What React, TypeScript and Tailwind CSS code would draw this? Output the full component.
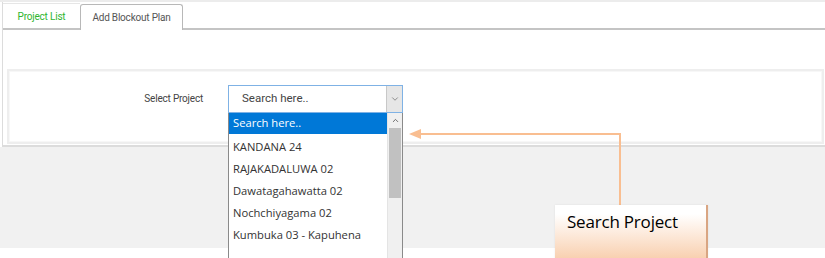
import { ChevronDown, ChevronUp } from "lucide-react";

const projects = [
  "KANDANA 24",
  "RAJAKADALUWA 02",
  "Dawatagahawatta 02",
  "Nochchiyagama 02",
  "Kumbuka 03 - Kapuhena",
];

const App = () => {
  return (
    <div className="relative w-[825px] h-[258px] overflow-hidden bg-white font-['Roboto',sans-serif]">
      {/* Main page area */}
      <div className="border-t-2 border-[#ececec]">
        <div className="ml-[2px] h-[145px] border-l border-b-2 border-[#dcdcdc] flex flex-col">
          {/* Tabs */}
          <div className="flex items-end h-[27px] mt-[1px] border-b-2 border-[#c4c4c4]">
            <div className="w-[77px] h-[25px] flex items-center justify-center text-[10px] tracking-[-0.2px] text-[#2fb52f] border-t border-[#e6e6e6]">
              Project List
            </div>
            <div className="w-[103px] h-[26px] -mb-[2px] flex items-center justify-center text-[10px] tracking-[-0.2px] text-[#555] bg-white border border-b-0 border-[#b8b8b8] rounded-t-[3px]">
              Add Blockout Plan
            </div>
          </div>

          {/* Form panel */}
          <div className="mt-[39px] ml-[4px] mr-[1px] h-[75px] border-2 border-[#eeeeee] shadow-[inset_0_0_0_1px_#f7f7f7] flex items-center">
            <div className="w-[219px] pr-[25px] text-right text-[10px] tracking-[-0.2px] text-[#444] -mt-[16px]">
              Select Project
            </div>
            <div className="-mt-[16px] flex h-[28px] w-[175px] border border-[#7fb2e5] bg-white">
              <div className="flex-1 flex items-center pl-[13px] text-[11.5px] text-[#444]">
                Search here..
              </div>
              <div className="w-[16px] flex items-center justify-center bg-[#e6e6e6] border-l border-[#c8c8c8]">
                <ChevronDown size={10} strokeWidth={1.5} className="text-[#555]" />
              </div>
            </div>
          </div>
        </div>
        <div className="h-[101px] bg-[#f1f1f1]" />
      </div>

      {/* Open dropdown list */}
      <div className="absolute left-[228px] top-[113px] w-[175px] h-[150px] bg-white border-l border-r border-[#8a8a8a] flex font-['Open_Sans',sans-serif]">
        <div className="flex-1 flex flex-col">
          <div className="h-[21px] flex items-center pl-[4px] bg-[#0078d7] text-white text-[11.2px]">
            Search here..
          </div>
          <div className="mt-[2px]">
            {projects.map((p) => (
              <div key={p} className="h-[22px] flex items-center pl-[4px] text-[11.2px] text-[#333]">
                {p}
              </div>
            ))}
          </div>
        </div>
        <div className="w-[15px] flex flex-col bg-[#f0f0f0] border-l border-[#e4e4e4]">
          <div className="h-[15px] flex items-center justify-center">
            <ChevronUp size={9} strokeWidth={2} className="text-[#444]" />
          </div>
          <div className="h-[70px] bg-[#c1c1c1] mx-[1px]" />
        </div>
      </div>

      {/* Annotation arrow */}
      <svg className="absolute left-[405px] top-[126px]" width="220" height="82" viewBox="0 0 220 82">
        <path d="M14 8 H215 V82" fill="none" stroke="#f9be91" strokeWidth="2" />
        <path d="M4 8 L16 3 L16 13 Z" fill="#f9be91" />
      </svg>

      {/* Annotation callout */}
      <div className="absolute left-[555px] top-[205px] w-[153px] h-[60px] bg-gradient-to-b from-white from-15% to-[#f7c9a4] border-r-2 border-[#d9a582] shadow-[0_0_2px_rgba(0,0,0,0.08)]">
        <div className="pl-[12px] pt-[4px] text-[17px] text-black font-['Open_Sans',sans-serif] tracking-[-0.2px]">
          Search Project
        </div>
      </div>
    </div>
  );
};

export default App;
